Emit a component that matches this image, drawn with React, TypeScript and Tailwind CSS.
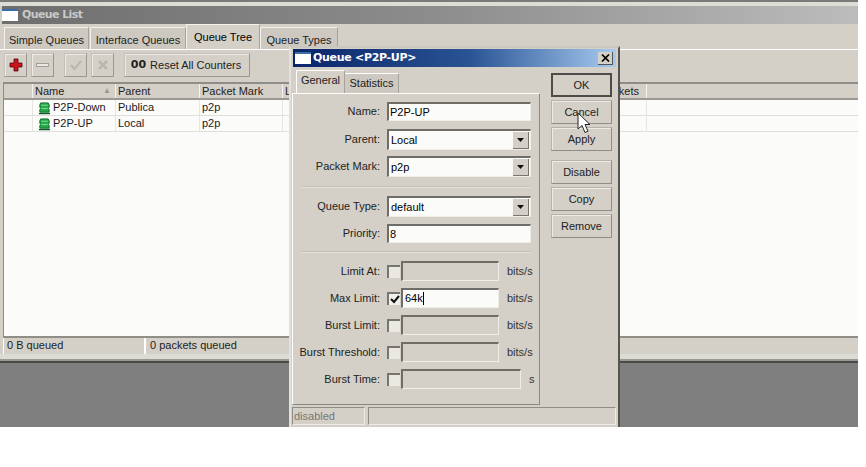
import type { ReactNode } from 'react';

const FONT = "font-['Liberation_Sans',Arial,sans-serif]";

function Tab({ label, active, className }: { label: string; active?: boolean; className: string }) {
  return (
    <div
      className={`flex items-center justify-center whitespace-nowrap border-t border-l border-[#f2f1ec] border-r border-r-[#a5a39c] ${
        active ? 'bg-[#d4d0c8] h-[25px] text-black' : 'bg-[#cdc9c1] h-[22px] mt-[2px] pt-[3px] text-[#222]'
      } ${className}`}
    >
      {label}
    </div>
  );
}

function ToolButton({ children, className = 'w-[23px]' }: { children: ReactNode; className?: string }) {
  return (
    <div className={`h-[24px] flex items-center justify-center bg-[#d4d0c8] border border-[#9a9892] border-t-[#c2c0b9] border-l-[#c2c0b9] shadow-[inset_1px_1px_0_#ecebe6] ${className}`}>
      {children}
    </div>
  );
}

function QueueIcon() {
  return (
    <svg width="13" height="14" viewBox="0 0 14 14" className="shrink-0">
      <path d="M3 1.5h8l1 2v3l-1 1 1 1v3H2v-3l1-1-1-1v-3z" fill="#27a84a" stroke="#0d6b2b" />
      <path d="M3.5 4h7M3.500 7.500h7" stroke="#7fe39a" />
      <path d="M1 13h12" stroke="#0c5a24" strokeWidth="1.400" />
    </svg>
  );
}

const columns = [
  { id: 'flags', label: '', w: 'w-[29px]' },
  { id: 'name', label: 'Name', w: 'w-[83px]' },
  { id: 'parent', label: 'Parent', w: 'w-[84px]' },
  { id: 'mark', label: 'Packet Mark', w: 'w-[83px]' },
  { id: 'limit', label: 'Limit At', w: 'w-[65px]' },
  { id: 'max', label: '', w: 'w-[65px]' },
  { id: 'avg', label: '', w: 'w-[65px]' },
  { id: 'queued', label: '', w: 'w-[70px]' },
  { id: 'bytes', label: '', w: 'w-[47px]' },
  { id: 'packets', label: 'Packets', w: 'w-[52px] pr-[7px] justify-end' },
];

const rows = [
  ['P2P-Down', 'Publica', 'p2p'],
  ['P2P-UP', 'Local', 'p2p'],
];

function Row({ name, parent, mark }: { name: string; parent: string; mark: string }) {
  return (
    <div className="flex h-[16px] border-b border-[#dededa] text-[#1a1a1a]">
      <div className="w-[29px] border-r border-[#e6e6e2]" />
      <div className="w-[83px] border-r border-[#e6e6e2] flex items-center gap-[2px] pl-[5px]">
        <QueueIcon />
        <span>{name}</span>
      </div>
      <div className="w-[84px] border-r border-[#e6e6e2] pl-[2px] leading-[15px]">{parent}</div>
      <div className="w-[83px] border-r border-[#e6e6e2] pl-[2px] leading-[15px]">{mark}</div>
      <div className="w-[364px] border-r border-[#e6e6e2]" />
    </div>
  );
}

function Sunken({ className, children }: { className: string; children?: ReactNode }) {
  return (
    <div className={`border-t-2 border-l-2 border-t-[#6f6d68] border-l-[#6f6d68] border-b border-r border-b-[#eeede8] border-r-[#eeede8] flex items-center ${className}`}>
      {children}
    </div>
  );
}

function Label({ text }: { text: string }) {
  return <div className="w-[91px] text-right pr-[4px] whitespace-nowrap text-[#222]">{text}:</div>;
}

function TextField({ label, value, className }: { label: string; value: string; className: string }) {
  return (
    <div className={`flex items-center gap-[3px] ${className}`}>
      <Label text={label} />
      <Sunken className="w-[144px] h-full bg-[#fbfbfa] pl-[1px]">{value}</Sunken>
    </div>
  );
}

function SelectField({ label, value, className }: { label: string; value: string; className: string }) {
  return (
    <div className={`flex items-center gap-[3px] ${className}`}>
      <Label text={label} />
      <Sunken className="w-[144px] h-full bg-[#fbfbfa] pl-[2px] justify-between">
        <span>{value}</span>
        <div className="w-[16px] h-[17px] mr-[1px] bg-[#d4d0c8] border-r border-b border-[#77756f] flex items-center justify-center">
          <svg width="7" height="4" viewBox="0 0 7 4">
            <path d="M0 0h7L3.500 4z" fill="#111" />
          </svg>
        </div>
      </Sunken>
    </div>
  );
}

function LimitField({ label, value, unit, on, wide, className }: { label: string; value?: string; unit: string; on?: boolean; wide?: boolean; className: string }) {
  return (
    <div className={`flex items-center h-[20px] gap-[3px] ${className}`}>
      <Label text={label} />
      <div className={`w-[13px] h-[13px] flex items-center justify-center border-t-2 border-l-2 border-t-[#77756f] border-l-[#77756f] shrink-0 ${on ? 'bg-[#f0f0ee]' : 'bg-[#e9e8e3]'}`}>
        {on && (
          <svg width="10" height="9" viewBox="0 0 10 9">
            <path d="M1 4l3 3 5-6" fill="none" stroke="#111" strokeWidth="2" />
          </svg>
        )}
      </div>
      <Sunken className={`ml-[-2px] h-full pl-[2px] ${wide ? 'w-[120px]' : 'w-[98px]'} ${on ? 'bg-[#fbfbfa]' : 'bg-[#d4d0c8]'}`}>
        {on && (
          <>
            <span>{value}</span>
            <span className="w-px h-[13px] bg-black" />
          </>
        )}
      </Sunken>
      <span className="ml-[5px] text-[#333]">{unit}</span>
    </div>
  );
}

function DialogButton({ label, strong, className }: { label: string; strong?: boolean; className: string }) {
  return (
    <div
      className={`w-[61px] h-[24px] flex items-center justify-center text-[#222] ${className} ${
        strong ? 'border-2 border-[#4d4c48]' : 'border border-[#8f8d87] border-t-[#b5b3ac] border-l-[#b5b3ac] shadow-[inset_1px_1px_0_#ecebe6]'
      }`}
    >
      {label}
    </div>
  );
}

function QueueDialog() {
  return (
    <div className="absolute left-[289px] top-[46px] w-[331px] h-[381px] bg-[#d4d0c8] border-t-2 border-l-2 border-t-[#c9c7c0] border-l-[#e2e1db] border-r-2 border-r-[#55544f] pl-[1px] flex flex-col">
      <div className="mt-[1px] ml-[1px] w-[323px] h-[18px] shrink-0 flex items-center bg-[linear-gradient(90deg,#0a246a,#2a5494_55%,#a6caf0)] pl-[2px]">
        <div className="w-[16px] h-[12px] bg-white border-t-2 border-[#3a6ea5] shrink-0" />
        <span className="ml-[2px] text-white font-bold text-[11px] font-['DejaVu_Sans',sans-serif] tracking-[-0.3px]">Queue &lt;P2P-UP&gt;</span>
        <div className="ml-auto mr-[3px] w-[15px] h-[13px] bg-[#d4d0c8] border-r border-b border-[#555] flex items-center justify-center">
          <svg width="9" height="8" viewBox="0 0 9 8">
            <path d="M1 0.500l7 7M8 0.500l-7 7" stroke="#000" strokeWidth="1.700" />
          </svg>
        </div>
      </div>
      <div className="flex flex-1 min-h-0">
        <div className="w-[248px] shrink-0">
          <div className="flex h-[26px] pl-[4px] items-end">
            <div className="w-[49px] h-[23px] flex items-center justify-center pb-1 bg-[#d4d0c8] border-t border-l border-white border-r border-r-[#a5a39c] text-[#222]">General</div>
            <div className="w-[54px] h-[20px] flex items-center justify-center bg-[#cdc9c1] border-t border-white border-r border-r-[#a5a39c] text-[#222]">Statistics</div>
          </div>
          <div className="h-[312px] border-t border-l border-white border-r border-b border-r-[#8a8984] border-b-[#8a8984] pt-[8px]">
            <TextField label="Name" value="P2P-UP" className="h-[19px]" />
            <SelectField label="Parent" value="Local" className="h-[21px] mt-[8px]" />
            <SelectField label="Packet Mark" value="p2p" className="h-[21px] mt-[6px]" />
            <div className="h-[2px] mx-[8px] mt-[9px] bg-[#c2bfb7] border-b border-[#e4e3dd]" />
            <SelectField label="Queue Type" value="default" className="h-[21px] mt-[8px]" />
            <TextField label="Priority" value="8" className="h-[19px] mt-[7px]" />
            <div className="h-[2px] mx-[8px] mt-[8px] bg-[#c2bfb7] border-b border-[#e4e3dd]" />
            <LimitField label="Limit At" unit="bits/s" className="mt-[8px]" />
            <LimitField label="Max Limit" value="64k" unit="bits/s" on className="mt-[7px]" />
            <LimitField label="Burst Limit" unit="bits/s" className="mt-[7px]" />
            <LimitField label="Burst Threshold" unit="bits/s" className="mt-[7px]" />
            <LimitField label="Burst Time" unit="s" wide className="mt-[7px]" />
          </div>
        </div>
        <div className="flex flex-col ml-[11px] pt-[6px]">
          <DialogButton label="OK" strong className="" />
          <DialogButton label="Cancel" className="mt-[3px]" />
          <DialogButton label="Apply" className="mt-[3px]" />
          <DialogButton label="Disable" className="mt-[9px]" />
          <DialogButton label="Copy" className="mt-[3px]" />
          <DialogButton label="Remove" className="mt-[3px]" />
        </div>
      </div>
      <div className="flex h-[18px] mb-[2px] gap-[3px] text-[#777] shrink-0">
        <div className="w-[73px] border-t border-l border-[#8f8d87] border-r border-b border-r-[#eeede8] border-b-[#eeede8] pl-[1px] leading-[16px]">disabled</div>
        <div className="w-[248px] border-t border-l border-[#8f8d87] border-r border-b border-r-[#eeede8] border-b-[#eeede8]" />
      </div>
      {/* mouse pointer over Cancel */}
      <svg width="14" height="22" viewBox="0 0 14 22" className="absolute left-[286px] top-[64px]">
        <path d="M1 1v16l4-3.500 3 7 3-1.300-3-6.700h5z" fill="#fff" stroke="#222" />
      </svg>
    </div>
  );
}

export default function App() {
  return (
    <div className={`relative w-[866px] h-[467px] bg-white overflow-hidden text-[11px] ${FONT}`}>
      <div className="w-[858px] h-[427px] flex flex-col bg-[#d4d0c8]">
        <div className="h-[6px] border-t-2 border-[#7a7a76] bg-[#dddcd6] shrink-0" />
        <div className="h-[18px] ml-[2px] shrink-0 flex items-center bg-[linear-gradient(90deg,#6e6e6e,#8c8c8c_50%,#bcbcbc)]">
          <div className="w-[16px] h-[12px] bg-white border-t-2 border-[#3a6ea5]" />
          <span className="ml-[4px] font-bold text-[#c9c9c9] text-[11px] font-['DejaVu_Sans',sans-serif] tracking-[-0.6px]">Queue List</span>
        </div>
        <div className="h-[26px] shrink-0 flex pl-[4px] border-b border-white">
          <Tab label="Simple Queues" className="w-[85px] self-end" />
          <Tab label="Interface Queues" className="w-[96px] ml-[1px] self-end" />
          <Tab label="Queue Tree" active className="w-[74px] self-end" />
          <Tab label="Queue Types" className="w-[78px] self-end" />
        </div>
        <div className="h-[32px] shrink-0 flex items-start pt-[3px] pl-[4px]">
          <ToolButton>
            <svg width="14" height="14" viewBox="0 0 14 14">
              <path d="M5 1h4v4h4v4H9v4H5V9H1V5h4z" fill="#cf111b" stroke="#4d080c" strokeWidth="0.800" />
            </svg>
          </ToolButton>
          <ToolButton className="w-[23px] ml-[4px]">
            <div className="w-[13px] h-[4px] bg-[#e9e8e3] border border-[#a09e97]" />
          </ToolButton>
          <ToolButton className="w-[23px] ml-[10px]">
            <svg width="14" height="12" viewBox="0 0 14 12">
              <path d="M2 6l3.500 4L12 2" fill="none" stroke="#b8b6ae" strokeWidth="2" />
            </svg>
          </ToolButton>
          <ToolButton className="w-[23px] ml-[4px]">
            <svg width="12" height="12" viewBox="0 0 12 12">
              <path d="M2 2l8 8M10 2l-8 8" fill="none" stroke="#b8b6ae" strokeWidth="2.500" />
            </svg>
          </ToolButton>
          <ToolButton className="w-[126px] ml-[10px] gap-[4px] pr-[2px] text-[#222]">
            <span className="font-bold text-[11px] font-['DejaVu_Sans',sans-serif]">00</span>
            <span>Reset All Counters</span>
          </ToolButton>
        </div>
        <div className="h-[254px] shrink-0 ml-[3px] flex flex-col bg-[#fbfbfa] border-t-2 border-[#8f8d87] border-l border-l-[#8f8d87]">
          <div className="flex h-[16px] bg-[#d4d0c8] border-b-2 border-[#9a9892] text-[#222] shrink-0">
            {columns.map(col => (
              <div key={col.id} className={`${col.w} border-r border-r-[#f4f3ee] pl-[2px] leading-[14px] flex ${col.id === 'packets' ? '' : 'justify-between'} overflow-hidden whitespace-nowrap`}>
                {col.label}
                {col.id === 'name' && <span className="text-[8px] text-[#99978f] pr-[4px]">▲</span>}
              </div>
            ))}
          </div>
          {rows.map(r => (
            <Row key={r[0]} name={r[0]} parent={r[1]} mark={r[2]} />
          ))}
        </div>
        <div className="h-[18px] shrink-0 ml-[3px] border-t-2 border-[#8f8d87] flex text-[#222]">
          <div className="w-[143px] pl-[3px] border-l border-white border-r-2 border-r-white leading-[15px]">0 B queued</div>
          <div className="w-[140px] ml-[2px] pl-[2px] leading-[15px]">0 packets queued</div>
        </div>
        <div className="h-[7px] shrink-0 bg-[#dcdbd5] border-b-2 border-[#9a9892]" />
        <div className="flex-1 bg-[#7f7f7f] border-t-2 border-[#4a4a48]" />
      </div>
      <QueueDialog />
    </div>
  );
}
